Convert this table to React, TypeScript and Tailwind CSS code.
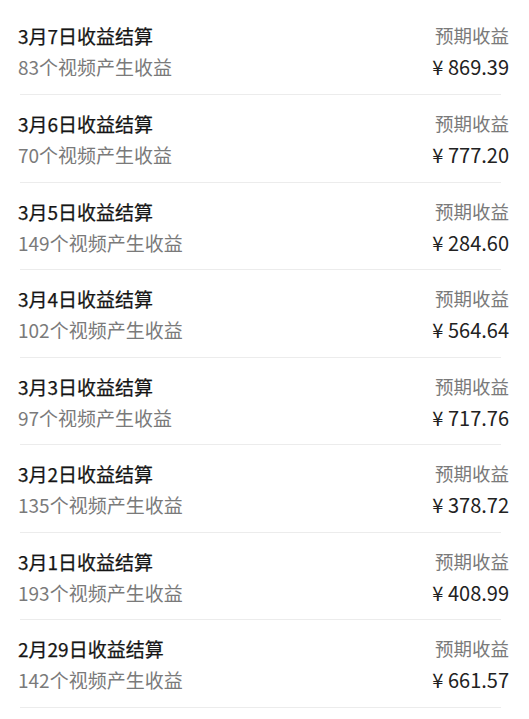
import React from "react";

const rows = [
  { date: "3月7日", count: 83, amount: "869.39" },
  { date: "3月6日", count: 70, amount: "777.20" },
  { date: "3月5日", count: 149, amount: "284.60" },
  { date: "3月4日", count: 102, amount: "564.64" },
  { date: "3月3日", count: 97, amount: "717.76" },
  { date: "3月2日", count: 135, amount: "378.72" },
  { date: "3月1日", count: 193, amount: "408.99" },
  { date: "2月29日", count: 142, amount: "661.57" },
];

export default function App() {
  return (
    <main
      className="w-[529px] h-[719px] bg-white overflow-hidden pt-[7.4px]"
      style={{ fontFamily: '"Noto Sans CJK SC", "Noto Sans", sans-serif' }}
    >
      {rows.map((r) => (
        <div key={r.date} className="h-[87.57px] flex flex-col">
          <div className="flex-1 flex justify-between pl-[18px] pr-[20px] pt-[13px]">
            {/* Left */}
            <div className="flex flex-col">
              <span className="text-[19px] leading-[31px] font-normal text-[#151515] [-webkit-text-stroke:0.25px_#151515]">
                {r.date}收益结算
              </span>
              <span className="text-[19px] leading-[31px] text-[#7a7a7a]">
                {r.count}个视频产生收益
              </span>
            </div>

            {/* Right */}
            <div className="flex flex-col items-end">
              <span className="text-[18.5px] leading-[31px] text-[#7a7a7a]">
                预期收益
              </span>
              <span className="text-[20px] leading-[31px] text-[#222222]">
                ¥ {r.amount}
              </span>
            </div>
          </div>

          {/* Divider */}
          <div className="h-px bg-[#ececec] ml-[20px] mr-[28px]" />
        </div>
      ))}
    </main>
  );
}
